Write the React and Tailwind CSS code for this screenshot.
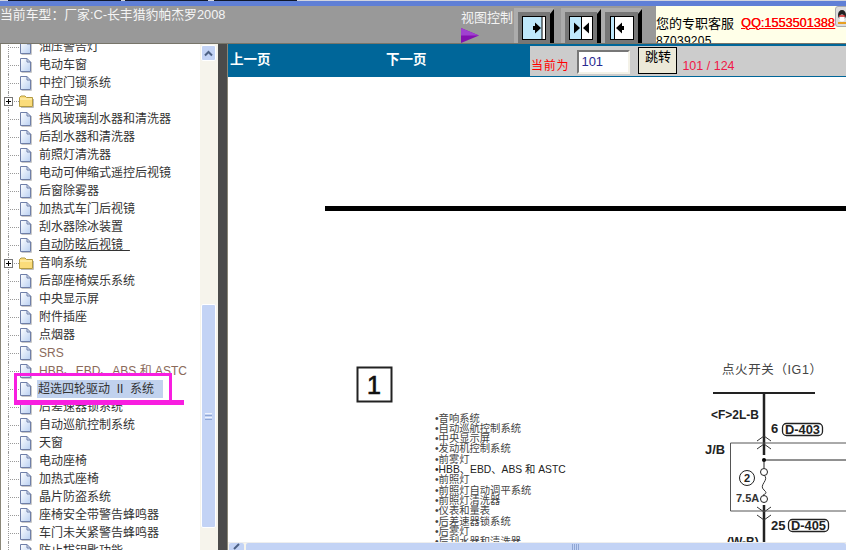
import React from "react";

const CJK = { fontFamily: '"Liberation Sans","Noto Sans CJK SC",sans-serif' };

const rows = [
  ["油压警告灯"], ["电动车窗"], ["中控门锁系统"], ["自动空调", "folder"], ["挡风玻璃刮水器和清洗器"],
  ["后刮水器和清洗器"], ["前照灯清洗器"], ["电动可伸缩式遥控后视镜"], ["后窗除雾器"], ["加热式车门后视镜"],
  ["刮水器除冰装置"], ["自动防眩后视镜", "link"], ["音响系统", "folder"], ["后部座椅娱乐系统"], ["中央显示屏"],
  ["附件插座"], ["点烟器"], ["SRS", "srs"], ["HBB、EBD、ABS 和 ASTC", "srs"], ["超选四轮驱动  II  系统", "sel"],
  ["后差速器锁系统"], ["自动巡航控制系统"], ["天窗"], ["电动座椅"], ["加热式座椅"], ["晶片防盗系统"],
  ["座椅安全带警告蜂鸣器"], ["车门未关紧警告蜂鸣器"], ["防止拔钥匙功能"],
];

function FileIcon() {
  return (
    <svg width="13" height="16" viewBox="0 0 13 16" className="shrink-0">
      <defs>
        <linearGradient id="fg" x1="0" y1="0" x2="1" y2="1">
          <stop offset="0" stopColor="#ffffff" />
          <stop offset="1" stopColor="#b9d0f2" />
        </linearGradient>
      </defs>
      <path d="M1.5 1.5H8L11.5 5V14.5H1.5Z" fill="url(#fg)" stroke="#6f7fa8" />
      <path d="M8 1.5V5H11.5" fill="none" stroke="#6f7fa8" />
      <path d="M12.5 5V15.5H2.5" fill="none" stroke="#c8c8c8" />
    </svg>
  );
}

function FolderIcon() {
  return (
    <svg width="15" height="13" viewBox="0 0 15 13" className="shrink-0">
      <path d="M.5 2.5 2 1H6L7.5 2.5H13.5V11.5H.5Z" fill="#fbdc7a" stroke="#b39a42" />
      <path d="M1 4H13" stroke="#fff4c0" />
      <path d="M14.5 4V12.5H2" fill="none" stroke="#bbbbbb" />
    </svg>
  );
}

function TreeRow({ label, kind }) {
  const folder = kind === "folder";
  return (
    <div className="relative flex h-[18px] shrink-0 items-center pl-[18px]">
      <span className="absolute left-[7px] top-0 h-full border-l border-dotted border-[#999]" />
      <span className="absolute left-[7px] top-[9px] w-[11px] border-t border-dotted border-[#999]" />
      {folder && (
        <span className="absolute left-[3px] top-[5px] flex h-[9px] w-[9px] items-center justify-center border border-[#777] bg-white">
          <span className="absolute h-px w-[5px] bg-black" />
          <span className="absolute h-[5px] w-px bg-black" />
        </span>
      )}
      <span className="relative flex w-[15px] shrink-0">{folder ? <FolderIcon /> : <FileIcon />}</span>
      <span
        className={`flex h-[18px] items-center whitespace-pre text-[12px] leading-none ${
          kind === "srs" ? "text-[#8a6a5a]" : "text-[#333]"
        } ${kind === "link" ? "underline" : ""} ${kind === "sel" ? "ml-[3px] w-[126px] bg-[#c1d2ee] pl-[1px]" : "ml-[5px]"}`}
      >
        {label}
        {kind === "link" && <span className="underline">&nbsp;&nbsp;</span>}
      </span>
    </div>
  );
}

function ViewButton({ children, className }) {
  return (
    <div className={`flex h-[35px] items-end justify-start bg-[#acacac] pl-[4px] ${className}`}>
      <div className="flex h-[31px] min-w-0 flex-1 justify-center bg-[#777] pt-[4px]">{children}</div>
      <span className="h-[34px] w-[4px] shrink-0 bg-black [clip-path:polygon(0_5px,100%_0,100%_100%,0_100%)]" />
    </div>
  );
}

function Glyph({ mode }) {
  return (
    <svg width="24" height="24" viewBox="0 0 24 24" className="shrink-0">
      <rect x=".5" y=".5" width="23" height="23" fill="#fff" stroke="#000" />
      {mode === "right" && (
        <>
          <rect x="1" y="1" width="19" height="22" fill="#bfe8fb" />
          <path d="M20 1V23" stroke="#000" />
          <path d="M13 6.5 19 12 13 17.5Z M11 10H13V14H11Z" fill="#000" />
        </>
      )}
      {mode === "both" && (
        <>
          <rect x="1" y="1" width="11" height="22" fill="#bfe8fb" />
          <path d="M12.5 1V23" stroke="#000" />
          <path d="M5 6.5 11 12 5 17.5Z M20 6.5 14 12 20 17.5Z" fill="#000" />
        </>
      )}
      {mode === "left" && (
        <>
          <rect x="1" y="1" width="3" height="22" fill="#bfe8fb" />
          <path d="M4.5 1V23" stroke="#000" />
          <path d="M12 6.5 6 12 12 17.5Z M12 10H14V14H12Z" fill="#000" />
        </>
      )}
    </svg>
  );
}

const listItems = [
  "音响系统", "自动巡航控制系统", "中央显示屏", "发动机控制系统", "前雾灯", "HBB、EBD、ABS 和 ASTC",
  "前照灯", "前照灯自动调平系统", "前照灯清洗器", "仪表和量表", "后差速器锁系统", "后雾灯", "后刮水器和清洗器",
];

function Drawing() {
  return (
    <svg viewBox="228 77 618 465" width="618" height="465" className="block" style={CJK}>
      <rect x="325" y="206" width="521" height="5" fill="#000" />
      <rect x="357.5" y="367.5" width="34" height="34" fill="#fff" stroke="#222" strokeWidth="2" />
      <text x="374" y="394" fontSize="25" textAnchor="middle" fill="#111" stroke="#111" strokeWidth="0.7">1</text>
      {listItems.map((t, i) => (
        <text key={t} x="435" y={421.5 + i * 10.3} fontSize="10.3" fill={i === 5 ? "#222" : "#444"}>•{t}</text>
      ))}
      <text x="722" y="374" fontSize="12.5" fill="#444" letterSpacing="0.6">点火开关（IG1）</text>
      <path d="M713 393H815" stroke="#222" strokeWidth="2" />
      <path d="M764 393V455" stroke="#222" strokeWidth="2.5" />
      <path d="M764 505V542" stroke="#222" strokeWidth="2.5" />
      <path d="M757 441 764 436 771 441M757 449 764 444 771 449" fill="none" stroke="#333" />
      <path d="M757 507 764 512 771 507M757 515 764 520 771 515" fill="none" stroke="#333" />
      <text x="711" y="419" fontSize="13" fontWeight="700" textLength="48" lengthAdjust="spacingAndGlyphs" fill="#222">&lt;F&gt;2L-B</text>
      <text x="771" y="433" fontSize="13" fontWeight="700" fill="#222">6</text>
      <rect x="782.5" y="423.5" width="40" height="12" rx="4" fill="#fff" stroke="#222" strokeWidth="1.3" />
      <text x="785" y="433.5" fontSize="12" fontWeight="700" textLength="35" lengthAdjust="spacingAndGlyphs" fill="#222">D-403</text>
      <text x="705" y="454" fontSize="13" fontWeight="700" textLength="20" lengthAdjust="spacingAndGlyphs" fill="#222">J/B</text>
      <path d="M846 443H730.5V511H846" fill="none" stroke="#555" />
      <path d="M764 460H846" stroke="#222" />
      <circle cx="764" cy="460" r="2" fill="#000" />
      <path d="M764 460V468" stroke="#222" />
      <circle cx="764" cy="472" r="3.5" fill="#fff" stroke="#222" />
      <circle cx="764" cy="499" r="3.5" fill="#fff" stroke="#222" />
      <path d="M764 475C770 480 758 485 764 490S760 494 764 496" fill="none" stroke="#333" />
      <circle cx="747" cy="478" r="7.5" fill="#fff" stroke="#222" />
      <text x="747" y="482" fontSize="11" fontWeight="700" textAnchor="middle" fill="#222">2</text>
      <text x="736" y="502" fontSize="11" fontWeight="700" fill="#333">7.5A</text>
      <text x="771" y="530" fontSize="13" fontWeight="700" fill="#222">25</text>
      <rect x="788.5" y="519.5" width="40" height="12" rx="4" fill="#fff" stroke="#222" strokeWidth="1.3" />
      <text x="791" y="529.5" fontSize="12" fontWeight="700" textLength="35" lengthAdjust="spacingAndGlyphs" fill="#222">D-405</text>
      <text x="727" y="546" fontSize="12" fontWeight="700" fill="#222">(W-B)</text>
    </svg>
  );
}

export default function App() {
  return (
    <div className="flex h-[550px] w-[846px] flex-col overflow-hidden bg-white" style={CJK}>
      {/* title strip */}
      <div className="h-[6px] shrink-0 bg-[#5f7fd6]">
        <div className="flex h-[1px] bg-[#d0d4e0]">
          <span className="ml-[8px] w-[113px] bg-[#10182c]" />
          <span className="ml-[4px] w-[83px] bg-[#10182c]" />
          <span className="ml-[6px] w-[83px] bg-[#10182c]" />
        </div>
      </div>

      {/* header */}
      <div className="flex h-[37px] shrink-0 bg-[#999]">
        <div className="w-[461px] shrink-0 whitespace-nowrap pt-[1px] text-[12.85px] leading-[16px] text-[#f4f4f4]">
          当前车型：厂家:C-长丰猎豹帕杰罗2008
        </div>
        <div className="flex w-[53px] shrink-0 flex-col">
          <span className="mt-[4px] whitespace-nowrap text-[13px] leading-[16px] text-[#f4f4f4]">视图控制</span>
          <svg width="18" height="15" viewBox="0 0 18 15" className="mt-[2px]">
            <path d="M0 0 18 7.5 0 15Z" fill="#8410b0" />
            <path d="M0 0 18 7.5H0Z" fill="#a040d0" />
          </svg>
        </div>
        <div className="flex w-[142px] shrink-0 items-end">
          <ViewButton className="w-[40px]"><Glyph mode="right" /></ViewButton>
          <ViewButton className="ml-[7px] w-[40px]"><Glyph mode="both" /></ViewButton>
          <ViewButton className="w-[41px]"><Glyph mode="left" /></ViewButton>
        </div>
        <div className="relative min-w-0 flex-1 overflow-hidden bg-[#ffffe8]">
          <div className="mt-[9px] flex h-[16px] items-center whitespace-nowrap text-[13px] leading-none text-black">
            您的专职客服
            <span className="ml-[7px] text-[12.7px] font-normal text-[#f00] underline [text-shadow:0.3px_0_0_#f00]">QQ:1553501388</span>
          </div>
          <div className="mt-[3px] text-[12px] leading-[14px] tracking-[0.3px] text-black">87039205</div>
          <div className="absolute left-[179px] top-0 flex h-[21px] w-[14px] items-start rounded-[3px] border border-[#aaa] bg-[#ddd] pl-[1px] pt-[3px]">
            <svg width="11" height="15" viewBox="0 0 11 15" className="shrink-0">
              <ellipse cx="5" cy="5" rx="4" ry="5" fill="#222" />
              <ellipse cx="5" cy="8" rx="2.8" ry="3.5" fill="#fff" />
              <path d="M2 6H8" stroke="#d02020" strokeWidth="1.5" />
              <path d="M1 13H9" stroke="#e8a020" strokeWidth="2" />
            </svg>
          </div>
        </div>
      </div>

      {/* body */}
      <div className="h-px shrink-0 bg-[#77756a]" />
      <div className="flex min-h-0 flex-1">
        {/* tree */}
        <div className="relative flex h-full w-[218px] shrink-0 overflow-hidden border-l border-[#8a8778]">
          <div className="flex w-[199px] shrink-0 flex-col overflow-hidden bg-white">
            <div className="-mt-[6px] flex flex-col">
              {rows.map(([l, k]) => (
                <TreeRow key={l} label={l} kind={k} />
              ))}
            </div>
          </div>
          <div className="flex w-[18px] shrink-0 flex-col bg-[#f6f4ec] pl-[1px]">
            <div className="mt-[1px] flex h-[16px] w-[15px] items-center justify-center rounded-[2px] border border-[#fff] bg-[#c3d3f5]">
              <svg width="9" height="7" viewBox="0 0 9 7">
                <path d="M1 5.5 4.5 2 8 5.5" fill="none" stroke="#4d6185" strokeWidth="2" />
              </svg>
            </div>
            <div className="mt-[243px] flex h-[224px] w-[15px] items-center justify-center rounded-[2px] border border-[#fff] bg-[#c3d3f5]">
              <span className="flex flex-col gap-[1px]">
                <i className="block h-px w-[7px] bg-[#eef2fc]" />
                <i className="block h-px w-[7px] bg-[#8fa6d4]" />
                <i className="block h-px w-[7px] bg-[#eef2fc]" />
                <i className="block h-px w-[7px] bg-[#8fa6d4]" />
              </span>
            </div>
          </div>
          {/* annotation */}
          <div className="absolute left-[13px] top-[329px] h-[32px] w-[158px] border-[3px] border-b-[5px] border-[#f81ee0]" />
          <div className="absolute left-[170px] top-[356px] h-[5px] w-[13px] bg-[#f81ee0]" />
        </div>

        {/* splitter */}
        <div className="h-full w-[10px] shrink-0 border-r border-[#8a8778] bg-[#4b4b4b]" />

        {/* main */}
        <div className="flex min-w-0 flex-1 flex-col">
          <div className="flex h-[33px] shrink-0 bg-[#006699] pb-[1px]">
            <div className="flex h-full w-[302px] shrink-0 items-center pl-[2px] font-bold text-white" style={{ fontFamily: '"Liberation Serif","Noto Sans CJK SC",serif' }}>
              <span className="w-[156px] text-[13.5px]">上一页</span>
              <span className="text-[13.5px]">下一页</span>
            </div>
            <div className="mt-[2px] flex min-w-0 flex-1 items-start bg-[#ccc]">
              <span className="ml-[1px] mt-[12px] text-[12px] leading-[16px] tracking-[0.8px] text-[#f00]">当前为</span>
              <div className="ml-[8px] mt-[4px] flex h-[24px] w-[53px] items-center border-2 border-[#777] border-b-[#f4f2e8] border-r-[#f4f2e8] bg-white pl-[2px] text-[13px] text-[#2a2a90]">101</div>
              <button className="ml-[8px] mt-[1px] flex h-[27px] w-[39px] items-start justify-center border border-black bg-[#ece9d8] pt-[1px] text-[13px] leading-[16px] text-black">跳转</button>
              <span className="ml-[5px] mt-[13px] text-[12.5px] leading-[14px] text-[#f01848]">101 / 124</span>
            </div>
          </div>
          <div className="min-h-0 flex-1 overflow-hidden bg-white">
            <Drawing />
          </div>
          <div className="flex h-[8px] shrink-0 items-start border-t border-[#eee] bg-[#f6f4ec]">
            <div className="ml-[1px] flex h-full w-[15px] shrink-0 items-center justify-center rounded-t-[2px] bg-[#c3d3f5]">
              <svg width="9" height="7" viewBox="0 0 9 7">
                <path d="M2 6 7 1" fill="none" stroke="#4d6185" strokeWidth="2" />
              </svg>
            </div>
            <div className="ml-[2px] flex h-full flex-1 justify-center gap-px rounded-t-[2px] bg-[#c3d3f5] pl-[58px] pt-[1px]">
              <i className="block h-[6px] w-px bg-[#8fa6d4]" />
              <i className="block h-[6px] w-px bg-[#8fa6d4]" />
              <i className="block h-[6px] w-px bg-[#8fa6d4]" />
              <i className="block h-[6px] w-px bg-[#8fa6d4]" />
            </div>
          </div>
        </div>
      </div>
    </div>
  );
}
